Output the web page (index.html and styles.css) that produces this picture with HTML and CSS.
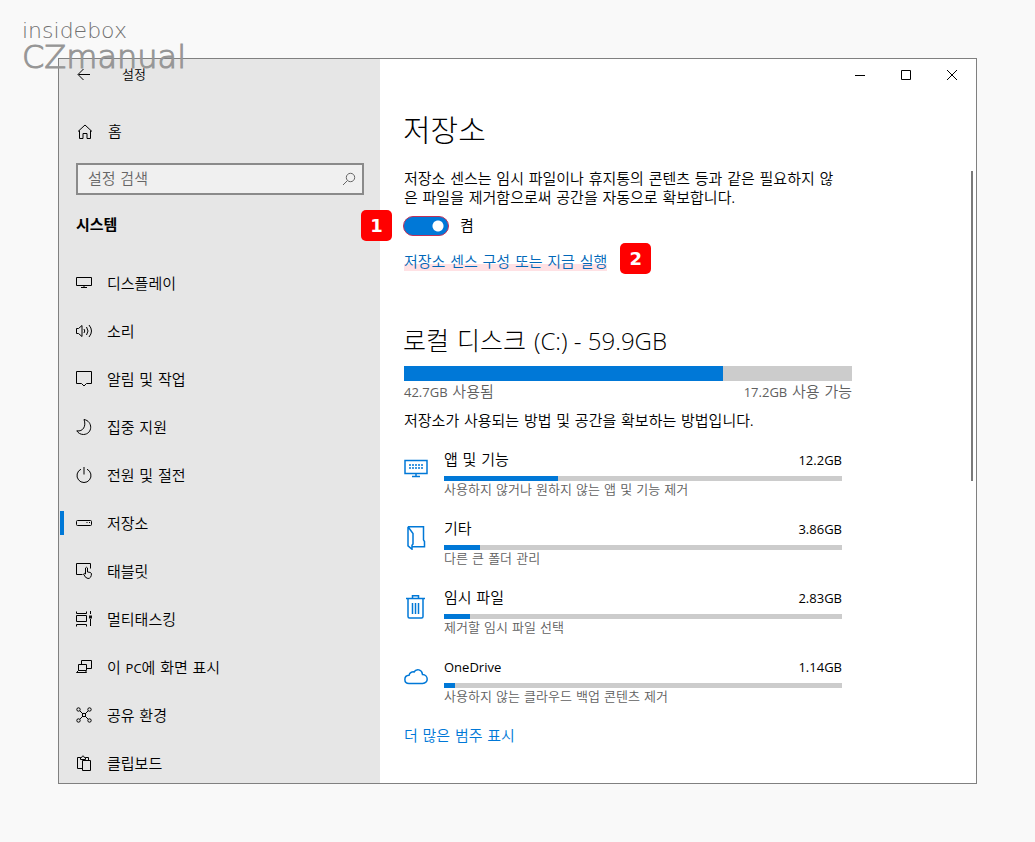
FILE: index.html
```html
<!DOCTYPE html>
<html lang="ko">
<head>
    <meta charset="UTF-8">
    <meta name="viewport" content="width=device-width, initial-scale=1.0">
    <title>설정</title>
    <link rel="stylesheet" href="styles.css">
</head>
<body>
    <div class="watermark">
        <span class="watermark-top">insidebox</span>
        <span class="watermark-name">CZmanual</span>
    </div>

    <div class="window">
        <aside class="sidebar">
            <div class="sidebar-title">
                <button type="button" class="back" aria-label="뒤로">
                    <svg width="16" height="16" viewBox="0 0 16 16"><path d="M14 7.500H2.500M7.500 2L2 7.500 7.500 13"/></svg>
                </button>
                <span>설정</span>
            </div>

            <a href="#" class="home">
                <svg width="16" height="16" viewBox="0 0 16 16"><path d="M1 7.500L8 1l7 6.500M2.500 6.500v8h3.500v-5h4v5h3.500v-8"/></svg>
                <span>홈</span>
            </a>

            <div class="search">
                <input type="text" placeholder="설정 검색" aria-label="설정 검색">
                <svg width="14" height="14" viewBox="0 0 14 14"><circle cx="8.500" cy="5.500" r="4.200"/><path d="M5.500 8.500L1 13"/></svg>
            </div>

            <h2 class="section">시스템</h2>

            <nav class="menu">
                <a href="#">
                    <svg width="16" height="16" viewBox="0 0 16 16"><path d="M.5 2.500h15v8H.5zM8 10.500v2M5 12.500h6"/></svg>
                    <span>디스플레이</span>
                </a>
                <a href="#">
                    <svg width="16" height="16" viewBox="0 0 16 16"><path d="M.5 5.500h2L6 2.500v11L2.500 10.500h-2zM8 6q1.500 2 0 4M10.500 4q3 4 0 8M13 2q5 6 0 12"/></svg>
                    <span>소리</span>
                </a>
                <a href="#">
                    <svg width="16" height="16" viewBox="0 0 16 16"><path d="M.5.5h15v12h-5L8 15l-2.500-2.500h-5z"/></svg>
                    <span>알림 및 작업</span>
                </a>
                <a href="#">
                    <svg width="16" height="16" viewBox="0 0 16 16"><path d="M8 .5C17 2 17 15 7.500 15.500 4.500 15.500 2 14 .8 11.800 7 13 10.500 7 8 .5z"/></svg>
                    <span>집중 지원</span>
                </a>
                <a href="#">
                    <svg width="16" height="16" viewBox="0 0 16 16"><path d="M5 2.200a7 7 0 1 0 6 0M8 0v7.500"/></svg>
                    <span>전원 및 절전</span>
                </a>
                <a href="#" class="active">
                    <svg width="16" height="16" viewBox="0 0 16 16"><rect x=".5" y="5.500" width="15" height="5" rx="1"/><path d="M10.500 7.500h1M13 7.500h1"/></svg>
                    <span>저장소</span>
                </a>
                <a href="#">
                    <svg width="16" height="16" viewBox="0 0 16 16"><path d="M6.500 11.500h-6v-11h14v5M9.500 11V5q1-1.500 2 0v4q3 0 4 1.500-.2 5-3.500 5-2.500 0-4.500-4.500 1-1.200 2 0"/></svg>
                    <span>태블릿</span>
                </a>
                <a href="#">
                    <svg width="16" height="16" viewBox="0 0 16 16"><path d="M.5.5v2h10v-2M.5 15.500v-2h10v2M.5 4.500h10v6H.5zM14.500 0v3M14.500 8v7"/><path class="solid" d="M13 4.500h3v3h-3z"/></svg>
                    <span>멀티태스킹</span>
                </a>
                <a href="#">
                    <svg width="16" height="16" viewBox="0 0 16 16"><path d="M5.500 5.500V1.500h10v8h-5M2.500 5.500h8v6h-8zM2.500 11.500l-2 2h10l-1-2"/></svg>
                    <span>이 <b class="latin">PC</b>에 화면 표시</span>
                </a>
                <a href="#">
                    <svg width="16" height="16" viewBox="0 0 16 16"><circle cx="2.500" cy="2.500" r="1.700"/><circle cx="13.500" cy="2.500" r="1.700"/><circle cx="2.500" cy="13.500" r="1.700"/><circle cx="13.500" cy="13.500" r="1.700"/><circle cx="8" cy="8" r="1.700"/><path d="M4 4l3 3M12 4L9 7M4 12l3-3M12 12L9 9"/></svg>
                    <span>공유 환경</span>
                </a>
                <a href="#">
                    <svg width="16" height="16" viewBox="0 0 16 16"><path d="M6 13.500H1.500v-11h3M9.500 2.500h3v3M4.500 4.500v-2h1.200Q7-1 8.300 2.500h1.200v2zM6.500 5.500h8v10h-8z"/></svg>
                    <span>클립보드</span>
                </a>
            </nav>
        </aside>

        <main class="content">
            <div class="window-buttons">
                <button type="button" aria-label="최소화"><svg width="12" height="12" viewBox="0 0 12 12"><path d="M1 6.500h10"/></svg></button>
                <button type="button" aria-label="최대화"><svg width="12" height="12" viewBox="0 0 12 12"><path d="M1.500 1.500h9v9h-9z"/></svg></button>
                <button type="button" aria-label="닫기"><svg width="12" height="12" viewBox="0 0 12 12"><path d="M1 1l10 10M11 1L1 11"/></svg></button>
            </div>

            <div class="page">
                <h1>저장소</h1>
                <p class="intro">저장소 센스는 임시 파일이나 휴지통의 콘텐츠 등과 같은 필요하지 않은 파일을 제거함으로써 공간을 자동으로 확보합니다<span class="latin">.</span></p>

                <div class="toggle-row">
                    <span class="badge badge-one">1</span>
                    <input type="checkbox" id="storageSense" class="toggle" checked>
                    <label for="storageSense">켬</label>
                </div>

                <div class="link-row">
                    <a href="#" class="marked">저장소 센스 구성 또는 지금 실행</a>
                    <span class="badge badge-two">2</span>
                </div>

                <h2 class="disk-title">로컬 디스크 <span>(C:) - 59.9GB</span></h2>
                <div class="disk-bar"><div class="fill" style="width: 71.2%"></div></div>
                <div class="disk-labels">
                    <span><span class="latin">42.7GB</span> 사용됨</span>
                    <span><span class="latin">17.2GB</span> 사용 가능</span>
                </div>
                <p class="how">저장소가 사용되는 방법 및 공간을 확보하는 방법입니다<span class="latin">.</span></p>

                <div class="categories">
                    <a href="#" class="category">
                        <svg width="24" height="24" viewBox="0 0 24 24"><path d="M1 3.500h22v13H1zM12 16.500v3M8 19.500h8"/><path class="dots" d="M5 8h14M5 11h14"/></svg>
                        <div class="info">
                            <div class="row"><span>앱 및 기능</span><span class="latin">12.2GB</span></div>
                            <div class="bar"><div class="fill" style="width: 28.6%"></div></div>
                            <div class="desc">사용하지 않거나 원하지 않는 앱 및 기능 제거</div>
                        </div>
                    </a>
                    <a href="#" class="category">
                        <svg width="24" height="24" viewBox="0 0 24 24"><path d="M4 .8h15.500v13l1 1.700v5.200H8.500M4 .8v19l4 3.400v-4l1-1.200V7.500L4 .8"/></svg>
                        <div class="info">
                            <div class="row"><span>기타</span><span class="latin">3.86GB</span></div>
                            <div class="bar"><div class="fill" style="width: 9%"></div></div>
                            <div class="desc">다른 큰 폴더 관리</div>
                        </div>
                    </a>
                    <a href="#" class="category">
                        <svg width="24" height="24" viewBox="0 0 24 24"><path d="M2 3.500h19M8.500 3.500v-2.700h6v2.700M4 3.500v18q0 1.500 1.500 1.500h12q1.500 0 1.500-1.500v-18M8.500 8v11M11.500 8v11M14.500 8v11"/></svg>
                        <div class="info">
                            <div class="row"><span>임시 파일</span><span class="latin">2.83GB</span></div>
                            <div class="bar"><div class="fill" style="width: 6.5%"></div></div>
                            <div class="desc">제거할 임시 파일 선택</div>
                        </div>
                    </a>
                    <a href="#" class="category">
                        <svg width="24" height="24" viewBox="0 0 24 24"><path d="M5 19.500C-.5 19.500-.5 11.500 5 11.300 5.500 8 9 7.500 10 8 12.500 4 18 5.500 18.500 10.500c6 0 6.500 9 0 9z"/></svg>
                        <div class="info">
                            <div class="row"><span class="latin">OneDrive</span><span class="latin">1.14GB</span></div>
                            <div class="bar"><div class="fill" style="width: 2.8%"></div></div>
                            <div class="desc">사용하지 않는 클라우드 백업 콘텐츠 제거</div>
                        </div>
                    </a>
                </div>

                <a href="#" class="more">더 많은 범주 표시</a>
            </div>
            <div class="scrollbar"></div>
        </main>
    </div>
</body>
</html>
```
FILE: styles.css
```css
* {
    box-sizing: border-box;
}
body {
    margin: 0;
    padding: 58px;
    background-color: #f9f9f9;
    color: #000;
    font-family: "DejaVu Sans", "Noto Sans CJK KR", sans-serif;
    font-size: 15px;
    font-weight: 350;
    line-height: 20px;
}
h1, h2, p {
    margin: 0;
    font-weight: inherit;
}
a {
    color: inherit;
    text-decoration: none;
}
button {
    padding: 0;
    background: none;
    border: none;
    cursor: pointer;
}
svg {
    display: block;
    flex-shrink: 0;
    fill: none;
    stroke: #000;
    stroke-width: 1;
}
.latin {
    font-family: "Open Sans", "Noto Sans CJK KR", sans-serif;
    font-size: 13px;
    font-weight: 400;
}

.watermark {
    position: absolute;
    top: 20px;
    left: 22px;
    display: flex;
    flex-direction: column;
    color: #969696;
    font-weight: 200;
    z-index: 2;
}
.watermark-top {
    color: #707070;
    font-size: 22px;
    line-height: 22px;
}
.watermark-name {
    font-size: 32px;
    line-height: 30px;
    -webkit-text-stroke: 1px #969696;
}

.window {
    display: flex;
    height: calc(100vh - 116px);
    border: 1px solid #808080;
    background: #fff;
}

/* left side */
.sidebar {
    flex: 0 0 321px;
    overflow: hidden;
    background: #e6e6e6;
}
.sidebar-title {
    display: flex;
    align-items: center;
    gap: 30px;
    height: 32px;
    padding-left: 17px;
    font-size: 13px;
}
.home {
    display: flex;
    align-items: center;
    gap: 15px;
    height: 40px;
    margin-top: 21px;
    padding-left: 18px;
}
.search {
    display: flex;
    align-items: center;
    height: 32px;
    margin: 11px 16px 0 17px;
    padding: 0 6px 0 10px;
    background: #f0f0f0;
    border: 2px solid #8a8a8a;
}
.search input {
    flex: 1;
    min-width: 0;
    padding: 0;
    background: none;
    border: none;
    outline: none;
    font: inherit;
}
.search input::placeholder {
    color: #666;
    opacity: 1;
}
.search svg {
    stroke: #666;
}
.section {
    margin: 18px 0 22px 17px;
    font-size: 15px;
    font-weight: bold;
    line-height: 24px;
}
.menu a {
    display: flex;
    align-items: center;
    gap: 15px;
    height: 48px;
    padding-left: 17px;
}
.menu span {
    padding-top: 2px;
}
.menu .active {
    padding-left: 12px;
}
.menu .active::before {
    content: "";
    width: 4px;
    height: 24px;
    margin: 0 -3px 0 -11px;
    background: #0078d7;
}
.menu .solid {
    fill: #111;
    stroke: none;
}

/* right side */
.content {
    position: relative;
    flex: 1;
    min-width: 0;
}
.window-buttons {
    display: flex;
    justify-content: flex-end;
    height: 32px;
    padding-right: 1px;
}
.window-buttons button {
    display: flex;
    align-items: center;
    justify-content: center;
    width: 46px;
}
.page {
    max-width: 472px;
    padding-left: 24px;
}
h1 {
    margin: 20px 0 0 -1px;
    font-size: 30px;
    font-weight: 300;
    line-height: 40px;
}
.intro {
    margin: 19px 8px 0 0;
    line-height: 19px;
}
.toggle-row {
    position: relative;
    display: flex;
    align-items: center;
    gap: 11px;
    margin-top: 8px;
}
.toggle {
    appearance: none;
    width: 46px;
    height: 20px;
    margin: 0 0 0 -1px;
    background: radial-gradient(circle at 34px 50%, #fff 5px, transparent 6px) #0078d7;
    border: 1px solid #c0305a;
    border-radius: 10px;
}
.link-row {
    position: relative;
    width: fit-content;
    margin-top: 16px;
    color: #0067b8;
}
.marked {
    display: block;
    background: linear-gradient(#ffe1e4, #ffe1e4) 0 12px / 100% 7px no-repeat;
}
.badge {
    position: absolute;
    width: 31px;
    height: 31px;
    background: #f00;
    border-radius: 5px;
    color: #fff;
    font-size: 18px;
    font-weight: bold;
    line-height: 31px;
    text-align: center;
}
.badge-one {
    top: -6px;
    left: -43px;
}
.badge-two {
    top: -9px;
    left: calc(100% + 13px);
}
.disk-title {
    margin: 53px 0 0 -1px;
    font-size: 25px;
    font-weight: 300;
    line-height: 32px;
}
.disk-title span {
    font-family: "Open Sans", sans-serif;
    font-size: 24px;
}
.disk-bar {
    height: 15px;
    margin-top: 8px;
    background: #ccc;
}
.fill {
    height: 100%;
    background: #0078d7;
}
.disk-labels {
    display: flex;
    justify-content: space-between;
    margin-top: 1px;
    color: #606060;
}
.how {
    margin-top: 9px;
}
.categories {
    display: grid;
    gap: 20px;
    margin: 19px 10px 20px 0;
}
.category {
    display: flex;
    gap: 16px;
}
.category svg {
    margin-top: 7px;
    stroke: #0078d7;
    stroke-width: 1.5;
}
.category .dots {
    stroke-dasharray: 2 1;
}
.info {
    flex: 1;
}
.row {
    display: flex;
    justify-content: space-between;
}
.bar {
    height: 5px;
    margin-top: 6px;
    background: #ccc;
}
.desc {
    color: #606060;
    font-size: 13px;
    line-height: 18px;
}
.more {
    color: #0078d7;
}
.scrollbar {
    position: absolute;
    top: 112px;
    right: 3px;
    width: 2px;
    height: 310px;
    background: #7a7a7a;
}
```
